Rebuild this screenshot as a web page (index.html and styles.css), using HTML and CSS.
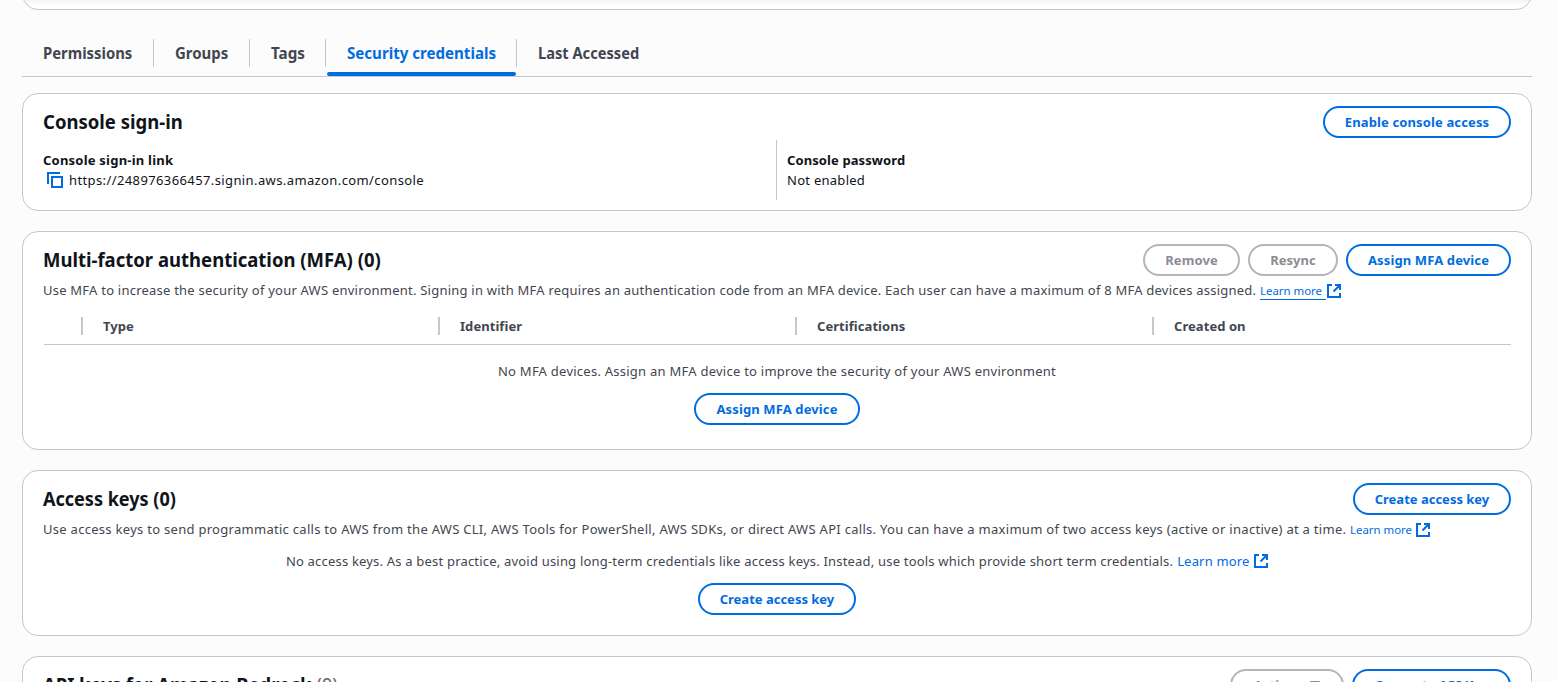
FILE: index.html
```html
<!DOCTYPE html>
<html lang="en">
<head>
<meta charset="utf-8">
<title>Security credentials</title>
<link rel="stylesheet" href="styles.css">
</head>
<body>
<svg class="defs" width="0" height="0">
  <symbol id="external" viewBox="0 0 14 14"><path d="M5 1H1v12h12V9M8 1h5v5M13 1 6.5 7.5" fill="none" stroke="currentColor" stroke-width="2"/></symbol>
</svg>
<main class="page">
  <section class="summary"></section>

  <nav class="tabs">
    <a class="tab tab-permissions"><span>Permissions</span></a>
    <a class="tab tab-groups"><span>Groups</span></a>
    <a class="tab tab-tags"><span>Tags</span></a>
    <a class="tab tab-security active"><span>Security credentials</span></a>
    <a class="tab tab-last"><span>Last Accessed</span></a>
  </nav>

  <section class="card signin">
    <header class="card-head">
      <h2 class="t-signin">Console sign-in</h2>
      <div class="actions"><button class="btn w-enable">Enable console access</button></div>
    </header>
    <div class="pairs">
      <div class="pair">
        <div class="label l-link">Console sign-in link</div>
        <div class="value">
          <svg class="copy" width="16" height="16" viewBox="0 0 16 16"><path d="M1 12V1h12M5 5h10v10H5z" fill="none" stroke="currentColor" stroke-width="2"/></svg>
          <span class="url">https://248976366457.signin.aws.amazon.com/console</span>
        </div>
      </div>
      <div class="pair second">
        <div class="label l-pass">Console password</div>
        <div class="value"><span class="v-not">Not enabled</span></div>
      </div>
    </div>
  </section>

  <section class="card mfa">
    <header class="card-head">
      <h2 class="t-mfa">Multi-factor authentication (MFA) (0)</h2>
      <div class="actions">
        <button class="btn disabled w-remove">Remove</button>
        <button class="btn disabled w-resync">Resync</button>
        <button class="btn w-assign">Assign MFA device</button>
      </div>
    </header>
    <p class="desc"><span class="d-mfa">Use MFA to increase the security of your AWS environment. Signing in with MFA requires an authentication code from an MFA device. Each user can have a maximum of 8 MFA devices assigned.</span><a class="more underlined"><span>Learn more</span></a><svg class="ext"><use href="#external"/></svg></p>
    <div class="columns">
      <div class="col">Type</div>
      <div class="col">Identifier</div>
      <div class="col">Certifications</div>
      <div class="col">Created on</div>
    </div>
    <div class="empty">
      <p><span class="e-mfa">No MFA devices. Assign an MFA device to improve the security of your AWS environment</span></p>
      <button class="btn w-assign-center">Assign MFA device</button>
    </div>
  </section>

  <section class="card keys">
    <header class="card-head">
      <h2 class="t-keys">Access keys (0)</h2>
      <div class="actions"><button class="btn w-create">Create access key</button></div>
    </header>
    <p class="desc"><span class="d-keys">Use access keys to send programmatic calls to AWS from the AWS CLI, AWS Tools for PowerShell, AWS SDKs, or direct AWS API calls. You can have a maximum of two access keys (active or inactive) at a time.</span><a class="more"><span>Learn more</span></a><svg class="ext"><use href="#external"/></svg></p>
    <div class="empty">
      <p><span class="e-keys">No access keys. As a best practice, avoid using long-term credentials like access keys. Instead, use tools which provide short term credentials.</span><a class="more large"><span>Learn more</span></a><svg class="ext"><use href="#external"/></svg></p>
      <button class="btn w-create">Create access key</button>
    </div>
  </section>

  <section class="card bedrock">
    <header class="card-head">
      <h2 class="t-bedrock">API keys for Amazon Bedrock <span class="count">(0)</span></h2>
      <div class="actions">
        <button class="btn disabled w-actions">Actions <svg class="caret" width="10" height="8" viewBox="0 0 10 8"><path d="M0 0h10L5 7z" fill="currentColor"/></svg></button>
        <button class="btn w-generate">Generate API Key</button>
      </div>
    </header>
  </section>
</main>
</body>
</html>
```
FILE: styles.css
```css
* { box-sizing: border-box; }
html, body { margin: 0; height: 682px; overflow: hidden; }
body { background: #fcfcfd; color: #0f141a; font: 13px/20px "Noto Sans", sans-serif; }
h2, p { margin: 0; }
.defs { display: block; height: 0; }
.page { width: 1510px; height: 682px; margin-left: 22px; overflow: hidden; }
.summary { height: 40px; margin-top: -30px; border: 1px solid #c6c6cd; border-radius: 16px; background: linear-gradient(#f4f4f5 29px, #fff 35px); }

.tabs { display: flex; height: 67px; padding-top: 29px; border-bottom: 1px solid #c6c6cd; }
.tab { height: 28px; padding-left: 21px; border-right: 1px solid #c6c6cd; color: #424650; font-size: 16px; line-height: 28px; font-weight: 700; white-space: nowrap; }
.tab span { display: inline-block; transform-origin: left; }
.tab-permissions { width: 132px; }
.tab-permissions span { transform: scaleX(.927); }
.tab-groups { width: 96px; }
.tab-groups span { transform: scaleX(.935); }
.tab-tags { width: 76px; }
.tab-tags span { transform: scaleX(.95); }
.tab-security { width: 191px; }
.tab-security span { transform: scaleX(.943); }
.tab-last { border: 0; }
.tab-last span { transform: scaleX(.915); }
.tab.active { position: relative; color: #006ce0; }
.tab.active::after { content: ""; position: absolute; left: 1px; right: 0; top: 33px; height: 4px; border-radius: 2px; background: #006ce0; }

.card { margin-bottom: 20px; padding: 12px 20px; border: 1px solid #c6c6cd; border-radius: 16px; background: #fff; }
.signin { height: 118px; margin-top: 16px; }
.mfa { height: 219px; }
.keys { height: 166px; }
.bedrock { height: 60px; margin: 0; }
.card-head { display: flex; justify-content: space-between; height: 32px; }
h2 { font-size: 20px; line-height: 32px; font-weight: 700; white-space: nowrap; transform-origin: left; transform: scaleX(.925); }
.t-keys { transform: scaleX(.902); }
.t-bedrock { transform: scaleX(.92); }
.count { color: #656871; font-weight: 400; }
.actions { display: flex; gap: 8px; }

.btn { display: flex; align-items: center; justify-content: center; gap: 8px; height: 32px; padding: 0; border: 2px solid #006ce0; border-radius: 16px; background: #fff; color: #006ce0; font: 700 13px/20px "Noto Sans", sans-serif; white-space: nowrap; }
.btn.disabled { border-color: #b4b4bb; color: #8c8c94; }
.w-enable { width: 188px; letter-spacing: .13px; }
.w-remove { width: 97px; letter-spacing: .1px; }
.w-resync { width: 90px; }
.w-assign { width: 165px; letter-spacing: .12px; }
.w-assign-center { width: 166px; letter-spacing: .12px; }
.w-create { width: 158px; }
.w-actions { width: 114px; }
.w-generate { width: 159px; letter-spacing: .12px; }
.caret { margin-bottom: 1px; }

.pairs { display: grid; grid-template-columns: 733px 1fr; height: 60px; margin-top: 2px; }
.pair { padding-top: 10px; }
.second { padding-left: 10px; border-left: 1px solid #c6c6cd; }
.label { font-weight: 700; }
.l-link { letter-spacing: .22px; }
.l-pass { letter-spacing: .1px; }
.v-not { letter-spacing: .27px; }
.url { letter-spacing: .39px; }
.value { display: flex; align-items: center; height: 20px; }
.copy { margin: 0 6px 0 4px; color: #006ce0; }

.desc { display: flex; height: 20px; margin-top: 4px; color: #424650; white-space: nowrap; }
.d-mfa { width: 1213px; letter-spacing: .226px; }
.d-keys { width: 1303px; letter-spacing: .287px; }
.e-mfa { letter-spacing: .25px; }
.e-keys { letter-spacing: .195px; }
.more { width: 62px; margin-left: 4px; color: #006ce0; font-size: 11.4px; line-height: 22px; }
.more.large { width: 73px; font-size: 13px; line-height: 20px; letter-spacing: .18px; }
.underlined { width: 66px; height: 20px; border-bottom: 1px solid #006ce0; }
.ext { flex: none; width: 14px; height: 14px; margin: 3px 0 0 4px; color: #006ce0; }
.desc .ext { margin-top: 4px; }
.underlined + .ext { margin-left: 1px; }

.columns { display: grid; grid-template-columns: repeat(4, 357px); height: 37px; margin: 8px 0 0 1px; padding: 9px 0 0 37px; border-bottom: 1px solid #c6c6cd; }
.col { height: 18px; padding-left: 20px; border-left: 2px solid #c6c6cd; color: #424650; font-weight: 700; line-height: 18px; letter-spacing: .06px; }

.empty { display: flex; flex-direction: column; align-items: center; gap: 12px; margin-top: 16px; color: #424650; }
.keys .empty { margin-top: 12px; }
.empty p { display: flex; height: 20px; white-space: nowrap; }
```
